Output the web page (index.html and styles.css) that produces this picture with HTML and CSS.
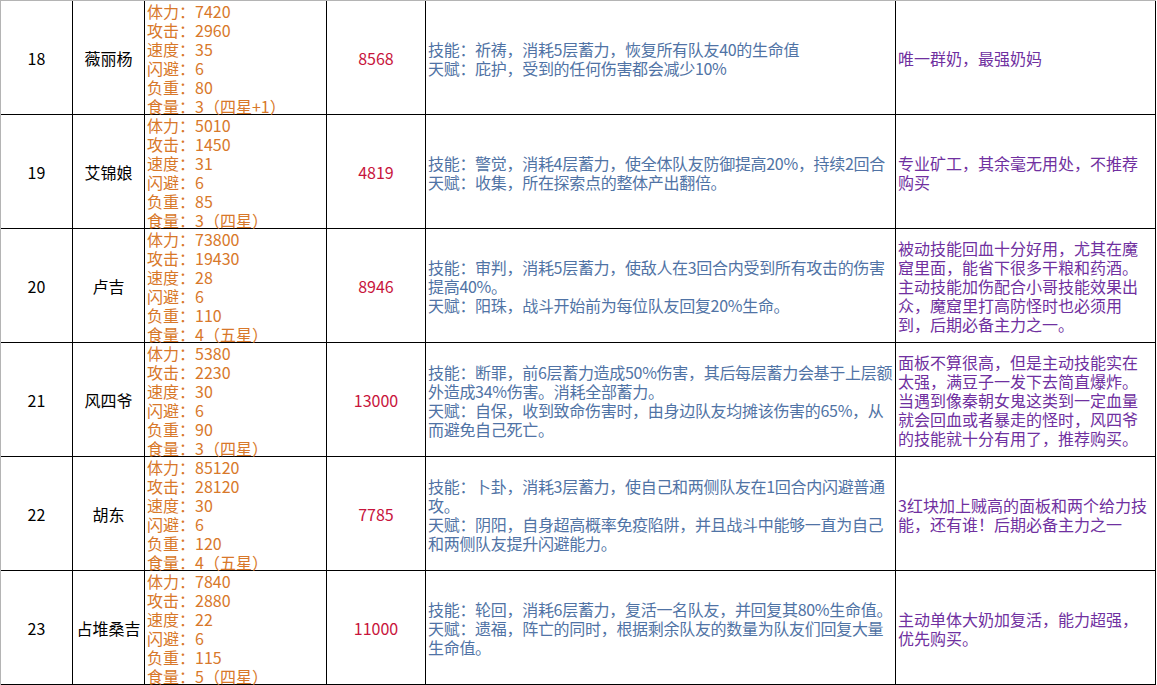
FILE: index.html
```html
<!DOCTYPE html>
<html lang="zh-CN">
<head>
<meta charset="utf-8">
<title>角色表</title>
<link rel="stylesheet" href="styles.css">
</head>
<body>
<div class="sheet">
  <div class="cell c-no">18</div>
  <div class="cell c-name">薇丽杨</div>
  <div class="cell c-stat"><div>体力：7420<br>攻击：2960<br>速度：35<br>闪避：6<br>负重：80<br>食量：3（四星+1）</div></div>
  <div class="cell c-price">8568</div>
  <div class="cell c-skill"><div>技能：祈祷，消耗5层蓄力，恢复所有队友40的生命值<br>天赋：庇护，受到的任何伤害都会减少10%</div></div>
  <div class="cell c-note"><div>唯一群奶，最强奶妈</div></div>

  <div class="cell c-no">19</div>
  <div class="cell c-name">艾锦娘</div>
  <div class="cell c-stat"><div>体力：5010<br>攻击：1450<br>速度：31<br>闪避：6<br>负重：85<br>食量：3（四星）</div></div>
  <div class="cell c-price">4819</div>
  <div class="cell c-skill"><div>技能：警觉，消耗4层蓄力，使全体队友防御提高20%，持续2回合<br>天赋：收集，所在探索点的整体产出翻倍。</div></div>
  <div class="cell c-note"><div>专业矿工，其余毫无用处，不推荐<br>购买</div></div>

  <div class="cell c-no">20</div>
  <div class="cell c-name">卢吉</div>
  <div class="cell c-stat"><div>体力：73800<br>攻击：19430<br>速度：28<br>闪避：6<br>负重：110<br>食量：4（五星）</div></div>
  <div class="cell c-price">8946</div>
  <div class="cell c-skill"><div>技能：审判，消耗5层蓄力，使敌人在3回合内受到所有攻击的伤害<br>提高40%。<br>天赋：阳珠，战斗开始前为每位队友回复20%生命。</div></div>
  <div class="cell c-note"><div>被动技能回血十分好用，尤其在魔<br>窟里面，能省下很多干粮和药酒。<br>主动技能加伤配合小哥技能效果出<br>众，魔窟里打高防怪时也必须用<br>到，后期必备主力之一。</div></div>

  <div class="cell c-no">21</div>
  <div class="cell c-name">风四爷</div>
  <div class="cell c-stat"><div>体力：5380<br>攻击：2230<br>速度：30<br>闪避：6<br>负重：90<br>食量：3（四星）</div></div>
  <div class="cell c-price">13000</div>
  <div class="cell c-skill"><div>技能：断罪，前6层蓄力造成50%伤害，其后每层蓄力会基于上层额<br>外造成34%伤害。消耗全部蓄力。<br>天赋：自保，收到致命伤害时，由身边队友均摊该伤害的65%，从<br>而避免自己死亡。</div></div>
  <div class="cell c-note"><div>面板不算很高，但是主动技能实在<br>太强，满豆子一发下去简直爆炸。<br>当遇到像秦朝女鬼这类到一定血量<br>就会回血或者暴走的怪时，风四爷<br>的技能就十分有用了，推荐购买。</div></div>

  <div class="cell c-no">22</div>
  <div class="cell c-name">胡东</div>
  <div class="cell c-stat"><div>体力：85120<br>攻击：28120<br>速度：30<br>闪避：6<br>负重：120<br>食量：4（五星）</div></div>
  <div class="cell c-price">7785</div>
  <div class="cell c-skill"><div>技能：卜卦，消耗3层蓄力，使自己和两侧队友在1回合内闪避普通<br>攻。<br>天赋：阴阳，自身超高概率免疫陷阱，并且战斗中能够一直为自己<br>和两侧队友提升闪避能力。</div></div>
  <div class="cell c-note"><div>3红块加上贼高的面板和两个给力技<br>能，还有谁！后期必备主力之一</div></div>

  <div class="cell c-no">23</div>
  <div class="cell c-name">占堆桑吉</div>
  <div class="cell c-stat"><div>体力：7840<br>攻击：2880<br>速度：22<br>闪避：6<br>负重：115<br>食量：5（四星）</div></div>
  <div class="cell c-price">11000</div>
  <div class="cell c-skill"><div>技能：轮回，消耗6层蓄力，复活一名队友，并回复其80%生命值。<br>天赋：遗福，阵亡的同时，根据剩余队友的数量为队友们回复大量<br>生命值。</div></div>
  <div class="cell c-note"><div>主动单体大奶加复活，能力超强，<br>优先购买。</div></div>
</div>
</body>
</html>
```

FILE: styles.css
```css
html, body {
  margin: 0;
  padding: 0;
  background: #ffffff;
}

body {
  width: 1157px;
  height: 685px;
  overflow: hidden;
  font-family: "Noto Sans CJK SC", "Noto Sans", sans-serif;
  font-size: 16px;
  line-height: 19px;
}

.sheet {
  display: grid;
  grid-template-columns: 72px 72px 182px 99px 470px 260px;
  grid-auto-rows: 114px;
  width: 1155px;
  border-left: 1px solid #b4b4b4;
  border-top: 1px solid #b4b4b4;
}

.cell {
  box-sizing: border-box;
  border-right: 1px solid #000000;
  border-bottom: 1px solid #000000;
  display: flex;
  align-items: center;
  padding-top: 2px;
  white-space: nowrap;
  color: #000000;
}

.c-no,
.c-name,
.c-price {
  justify-content: center;
}

.c-stat {
  color: #d8782a;
  padding-left: 2px;
}

.c-price {
  color: #c8143c;
}

.c-skill {
  color: #5073a5;
  padding-left: 2px;
  letter-spacing: -0.3px;
}

.c-note {
  color: #7030a0;
  padding-left: 2px;
}
```
